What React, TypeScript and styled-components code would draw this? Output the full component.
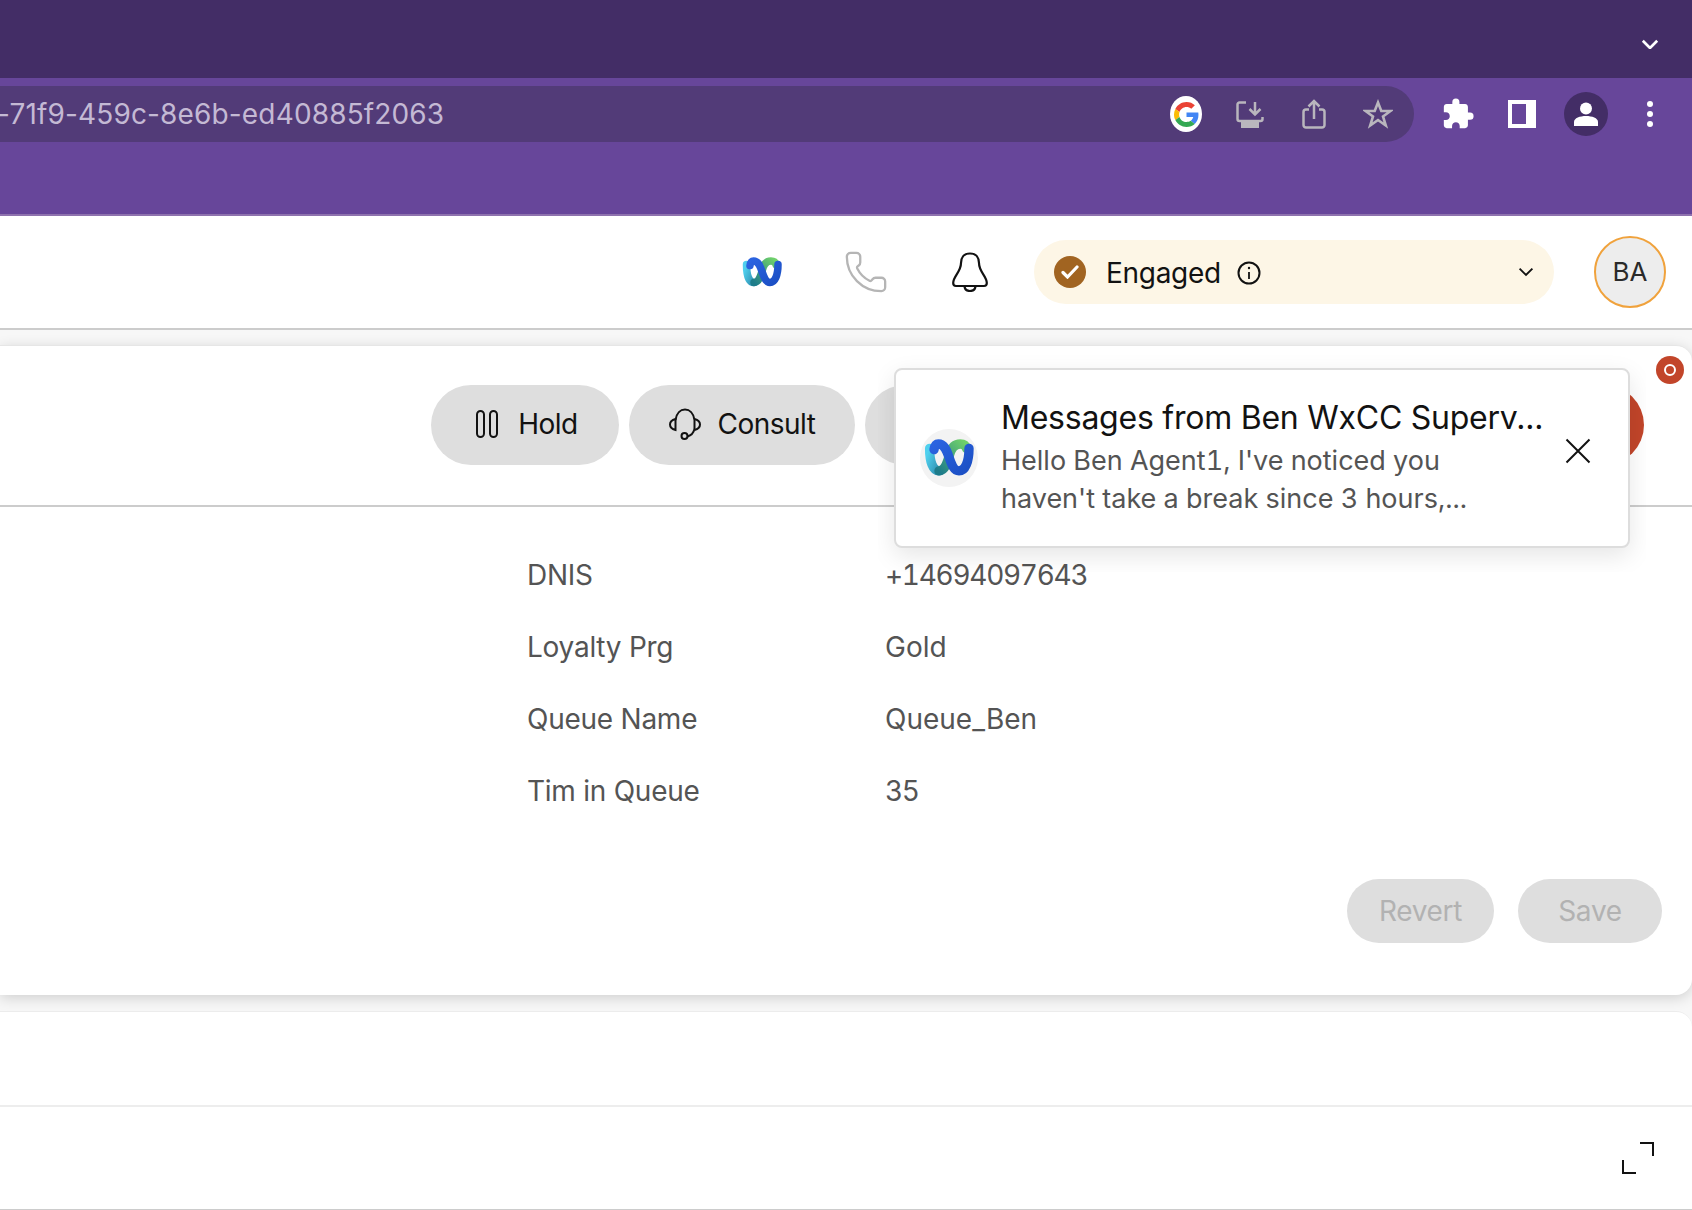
import { Fragment } from "react";
import { createGlobalStyle } from "styled-components";
import styled from "styled-components";
import { Phone } from "lucide-react";
import { MdExtension } from "react-icons/md";

const GlobalStyle = createGlobalStyle`
  html, body {
    margin: 0;
    padding: 0;
    background: #fff;
    font-family: Inter, "Liberation Sans", sans-serif;
  }
  * {
    box-sizing: border-box;
  }
`;

const Page = styled.div`
  width: 1692px;
  height: 1210px;
  overflow: hidden;
  display: flex;
  flex-direction: column;
  background: #f7f7f7;
`;

const TabStrip = styled.div`
  height: 78px;
  background: #432d66;
  display: flex;
  justify-content: flex-end;
  align-items: center;
  padding: 10px 33px 0 0;
`;

const Toolbar = styled.div`
  height: 138px;
  padding-top: 8px;
  background: #67469a;
  border-bottom: 2px solid #8e72ae;
  display: flex;
  align-items: flex-start;
`;

const AddressBar = styled.div`
  width: 1414px;
  height: 56px;
  border-radius: 0 28px 28px 0;
  background: #523b78;
  display: flex;
  align-items: center;
  padding-right: 4px;
  overflow: hidden;
`;

const Url = styled.div`
  flex: 1;
  margin-left: -3px;
  font-size: 28px;
  letter-spacing: 0.15px;
  color: #c4b9d4;
  white-space: nowrap;
`;

const ToolSlot = styled.div`
  width: 64px;
  height: 56px;
  display: flex;
  align-items: center;
  justify-content: center;
  flex-shrink: 0;
`;

const BrowserActions = styled.div`
  margin-left: 12px;
  display: flex;
`;

const GoogleBadge = styled.div`
  width: 32px;
  height: 36px;
  border-radius: 50%;
  background: #fff;
  display: flex;
  align-items: center;
  justify-content: center;
`;

const ProfileBadge = styled.div`
  width: 44px;
  height: 44px;
  border-radius: 50%;
  background: #432d66;
  display: flex;
  align-items: center;
  justify-content: center;
`;

const AppHeader = styled.header`
  height: 114px;
  background: #fff;
  border-bottom: 2px solid #cccccc;
  display: flex;
  justify-content: flex-end;
  align-items: center;
  padding-right: 26px;
`;

const HeaderSlot = styled.div`
  width: 104px;
  display: flex;
  align-items: center;
  justify-content: center;
`;

const StatusPill = styled.div`
  width: 520px;
  height: 64px;
  margin-left: 12px;
  padding: 0 20px;
  border-radius: 32px;
  background: #fdf6e6;
  display: flex;
  align-items: center;
`;

const StatusDot = styled.div`
  width: 32px;
  height: 32px;
  border-radius: 50%;
  background: #a16421;
  display: flex;
  align-items: center;
  justify-content: center;
`;

const StatusText = styled.span`
  margin-left: 20px;
  padding-top: 2px;
  font-size: 28px;
  letter-spacing: -0.3px;
  color: #121212;
`;

const StatusInfo = styled.span`
  margin-left: 16px;
  padding-top: 2px;
  display: flex;
`;

const StatusCaret = styled.span`
  margin-left: auto;
  display: flex;
`;

const UserAvatar = styled.div`
  width: 72px;
  height: 72px;
  margin-left: 40px;
  padding-bottom: 2px;
  border-radius: 50%;
  background: #ededed;
  border: 2px solid #f0a23c;
  display: flex;
  align-items: center;
  justify-content: center;
  font-size: 26px;
  color: #2a2a2a;
`;

const Workspace = styled.main`
  flex: 1;
  padding-top: 15px;
  display: flex;
  flex-direction: column;
  gap: 16px;
`;

const CallCard = styled.section`
  position: relative;
  height: 650px;
  background: #fff;
  border-top: 1px solid #e6e6e6;
  border-radius: 0 16px 16px 0;
  box-shadow: 0 3px 14px rgba(0, 0, 0, 0.16);
`;

const CallControls = styled.div`
  height: 161px;
  padding: 39px 48px 0 0;
  border-bottom: 2px solid #cccccc;
  display: flex;
  justify-content: flex-end;
  align-items: flex-start;
  gap: 10px;
`;

const ControlButton = styled.div<{ $width: number; $danger?: boolean; $gap?: number; $inset?: number }>`
  width: ${({ $width }) => $width}px;
  height: 80px;
  padding: 0 0 2px ${({ $inset }) => $inset ?? 0}px;
  border-radius: 40px;
  background: ${({ $danger }) => ($danger ? "#c2452a" : "#dedede")};
  display: flex;
  align-items: center;
  justify-content: center;
  gap: ${({ $gap }) => $gap ?? 20}px;
  font-size: 28px;
  letter-spacing: -0.5px;
  color: #121212;
`;

const Fields = styled.dl`
  margin: 32px 0 0;
  padding-left: 527px;
  display: grid;
  grid-template-columns: 358px 1fr;
  grid-auto-rows: 72px;
  align-items: center;
  font-size: 28px;
  color: #545454;
`;

const FieldLabel = styled.dt`
  margin: 0;
  letter-spacing: -0.25px;
`;

const FieldValue = styled.dd<{ $numeric?: boolean }>`
  margin: 0;
  ${({ $numeric }) => $numeric && "font-variant-numeric: tabular-nums; letter-spacing: -1.3px;"}
`;

const FormActions = styled.div`
  margin-top: 52px;
  padding-right: 30px;
  display: flex;
  justify-content: flex-end;
  gap: 24px;
`;

const GhostButton = styled.div<{ $width: number }>`
  width: ${({ $width }) => $width}px;
  height: 64px;
  border-radius: 32px;
  background: #dedede;
  color: #b2b2b2;
  font-size: 28px;
  letter-spacing: -0.3px;
  display: flex;
  align-items: center;
  justify-content: center;
`;

const ToastClip = styled.div`
  position: absolute;
  left: 878px;
  top: 0;
  width: 768px;
  height: 226px;
  padding: 22px 0 0 16px;
  overflow: hidden;
`;

const Toast = styled.div`
  width: 736px;
  height: 180px;
  background: #fff;
  border: 2px solid #dddddd;
  border-radius: 8px;
  box-shadow: 0 8px 24px rgba(0, 0, 0, 0.1);
  display: flex;
  align-items: center;
  padding: 0 37px 0 24px;
`;

const ToastLogo = styled.div`
  width: 58px;
  height: 58px;
  border-radius: 50%;
  background: #f3f3f3;
  display: flex;
  align-items: center;
  justify-content: center;
  flex-shrink: 0;
`;

const ToastBody = styled.div`
  margin-left: 23px;
  padding-bottom: 2px;
  flex: 1;
  min-width: 0;
`;

const ToastTitle = styled.div`
  margin-bottom: 2px;
  font-size: 32px;
  line-height: 44px;
  letter-spacing: -0.24px;
  color: #121212;
  white-space: nowrap;
`;

const ToastText = styled.div`
  font-size: 27px;
  line-height: 38px;
  font-variant-numeric: tabular-nums;
  color: #545454;
`;

const ToastClose = styled.div`
  margin-bottom: 14px;
  display: flex;
`;

const RecordBadge = styled.div`
  position: absolute;
  left: 1656px;
  top: 10px;
  width: 28px;
  height: 28px;
  border-radius: 50%;
  background: #c2452a;
  display: flex;
  align-items: center;
  justify-content: center;
`;

const RecordRing = styled.div`
  width: 12px;
  height: 12px;
  border-radius: 50%;
  border: 2.5px solid #fff;
`;

const LowerPanel = styled.section`
  flex: 1;
  background: #fff;
  border-top: 1px solid #ececec;
  border-bottom: 1px solid #cccccc;
  border-radius: 0 16px 0 0;
  display: flex;
  flex-direction: column;
`;

const PanelHead = styled.div`
  height: 95px;
  border-bottom: 2px solid #ededed;
`;

const PanelBody = styled.div`
  flex: 1;
  padding-right: 38px;
  display: flex;
  justify-content: flex-end;
  align-items: center;
`;

function WebexLogo({ size }: { size: number }) {
  return (
    <svg width={size} height={size * 0.75} viewBox="0 0 40 30" fill="none" strokeWidth="7.5" strokeLinecap="round">
      <defs>
        <linearGradient id="wxCyan" x1="0" y1="0" x2="1" y2="1">
          <stop offset="0" stopColor="#4fd0ee" />
          <stop offset="1" stopColor="#2f8fb0" />
        </linearGradient>
        <linearGradient id="wxGreen" x1="0" y1="1" x2="1" y2="0">
          <stop offset="0" stopColor="#1e7c8a" />
          <stop offset="1" stopColor="#6fd06a" />
        </linearGradient>
        <linearGradient id="wxBlue" x1="0" y1="0" x2="1" y2="1">
          <stop offset="0" stopColor="#2b63e0" />
          <stop offset="1" stopColor="#1b4fc4" />
        </linearGradient>
      </defs>
      <path d="M4.500 7.500C4.500 18 7 25.500 12 25.500" stroke="url(#wxCyan)" />
      <path d="M12 25.500C17 25.500 19 18 20.500 12.500C22 6.500 25 4 29 4C32 4 33.500 5.500 34 7.500" stroke="url(#wxGreen)" />
      <path d="M8 8.500C8.500 5.500 9.500 4 11.500 4C16 4 18 8.500 20 14.500C22 20.500 24 25.500 28 25.500C33 25.500 36 18 36 7.500" stroke="url(#wxBlue)" />
    </svg>
  );
}

function GoogleIcon() {
  return (
    <svg width="25" height="25" viewBox="0 0 48 48">
      <path fill="#EA4335" d="M24 9.500c3.540 0 6.710 1.220 9.210 3.600l6.850-6.850C35.900 2.380 30.470 0 24 0 14.620 0 6.510 5.380 2.560 13.220l7.980 6.190C12.430 13.720 17.740 9.500 24 9.500z" />
      <path fill="#4285F4" d="M46.980 24.550c0-1.570-.15-3.090-.38-4.550H24v9.020h12.940c-.58 2.960-2.260 5.480-4.780 7.180l7.730 6c4.510-4.180 7.090-10.360 7.090-17.650z" />
      <path fill="#FBBC05" d="M10.530 28.590c-.48-1.450-.76-2.990-.76-4.590s.27-3.140.76-4.590l-7.980-6.190C.92 16.460 0 20.120 0 24c0 3.880.92 7.540 2.560 10.780l7.970-6.190z" />
      <path fill="#34A853" d="M24 48c6.480 0 11.930-2.130 15.890-5.810l-7.730-6c-2.150 1.450-4.920 2.300-8.160 2.300-6.260 0-11.570-4.220-13.470-9.910l-7.980 6.190C6.510 42.620 14.620 48 24 48z" />
    </svg>
  );
}

function InstallIcon() {
  return (
    <svg width="28" height="27" viewBox="0 0 28 27" fill="none" stroke="#b9b6bd" strokeWidth="2.500">
      <path d="M10 1.500H3.500a2 2 0 0 0-2 2V18a2 2 0 0 0 2 2H24.500a2 2 0 0 0 2-2V16" />
      <path d="M19 1V13M13.500 8L19 13.500L24.500 8" />
      <rect x="5" y="21" width="18" height="6" fill="#b9b6bd" stroke="none" />
    </svg>
  );
}

function ShareIcon() {
  return (
    <svg width="24" height="30" viewBox="0 0 24 30" fill="none" stroke="#b9b6bd" strokeWidth="2.500">
      <path d="M7 10.500H4a2.500 2.500 0 0 0-2.500 2.500V26a2.500 2.500 0 0 0 2.500 2.500H20a2.500 2.500 0 0 0 2.500-2.500V13a2.500 2.500 0 0 0-2.500-2.500H17" />
      <path d="M12 20V2M6.500 7.500L12 2L17.500 7.500" />
    </svg>
  );
}

function StarIcon() {
  return (
    <svg width="30" height="30" viewBox="0 0 30 30" fill="none" stroke="#b9b6bd" strokeWidth="2.600" strokeLinejoin="miter">
      <path d="M15 3.500L18.300 12H27.500L20 17.500L22.800 26.500L15 21L7.200 26.500L10 17.500L2.500 12H11.700Z" />
    </svg>
  );
}

function SidePanelIcon() {
  return (
    <svg width="28" height="28" viewBox="0 0 28 28">
      <path fill="#fff" fillRule="evenodd" d="M0 0H28V28H0ZM4 4V24H18V4Z" />
    </svg>
  );
}

function ProfileIcon() {
  return (
    <svg width="26" height="26" viewBox="0 0 26 26" fill="#fff">
      <circle cx="13" cy="7.500" r="6" />
      <path d="M1 25V21C1 17 7 15 13 15C19 15 25 17 25 21V25Z" />
    </svg>
  );
}

function KebabIcon() {
  return (
    <svg width="6" height="28" viewBox="0 0 6 28" fill="#fff">
      <circle cx="3" cy="4" r="3" />
      <circle cx="3" cy="14" r="3" />
      <circle cx="3" cy="24" r="3" />
    </svg>
  );
}

function BellIcon() {
  return (
    <svg width="36" height="40" viewBox="0 0 36 40" fill="none" stroke="#121212" strokeWidth="2.200">
      <path d="M18 1.500C11.500 1.500 9 6 9 11C9 20 1.200 24 1.200 31C1.200 33 2.200 34 4 34H32C33.800 34 34.800 33 34.800 31C34.800 24 27 20 27 11C27 6 24.500 1.500 18 1.500Z" />
      <path d="M12.500 34.500C13 38 15.500 39 18 39C20.500 39 23 38 23.500 34.500" />
    </svg>
  );
}

function InfoIcon() {
  return (
    <svg width="24" height="24" viewBox="0 0 24 24" fill="none" stroke="#121212" strokeWidth="2">
      <circle cx="12" cy="12" r="10.500" />
      <path d="M12 11V18" strokeWidth="1.800" />
      <circle cx="12" cy="7" r="1.200" fill="#121212" stroke="none" />
    </svg>
  );
}

function Chevron({ width, color, stroke }: { width: number; color: string; stroke: number }) {
  return (
    <svg width={width} height={width * 0.6} viewBox="0 0 20 12" fill="none" stroke={color} strokeWidth={stroke}>
      <path d="M2 2L10 10L18 2" />
    </svg>
  );
}

function PauseIcon() {
  return (
    <svg width="22" height="28" viewBox="0 0 22 28" fill="none" stroke="#121212" strokeWidth="2">
      <rect x="1" y="1" width="7" height="26" rx="3.500" />
      <rect x="14" y="1" width="7" height="26" rx="3.500" />
    </svg>
  );
}

function HeadsetIcon() {
  return (
    <svg width="32" height="32" viewBox="0 0 32 32" fill="none" stroke="#121212" strokeWidth="2">
      <path d="M6.500 12C7.500 5 11.500 1.500 16 1.500C20.500 1.500 24.500 5 25.500 12V21" />
      <path d="M6.500 11C3 12 1 14 1 16.500C1 19 3 21 6.500 22V11Z" />
      <path d="M25.500 11C29 12 31 14 31 16.500C31 19 29 21 25.500 22" />
      <path d="M25.500 21C24.500 25 22 27.500 18.500 28.500" />
      <circle cx="15.500" cy="28" r="3" />
    </svg>
  );
}

function CloseIcon() {
  return (
    <svg width="26" height="26" viewBox="0 0 26 26" fill="none" stroke="#121212" strokeWidth="2">
      <path d="M1.500 1.500L24.500 24.500M24.500 1.500L1.500 24.500" />
    </svg>
  );
}

function ExpandIcon() {
  return (
    <svg width="32" height="32" viewBox="0 0 32 32" fill="none" stroke="#121212" strokeWidth="2">
      <path d="M18 1H31V14M1 18V31H14" />
    </svg>
  );
}

const fields = [
  { label: "DNIS", value: "+14694097643", numeric: true },
  { label: "Loyalty Prg", value: "Gold" },
  { label: "Queue Name", value: "Queue_Ben" },
  { label: "Tim in Queue", value: "35", numeric: true },
];

const App = () => {
  return (
    <Page>
      <GlobalStyle />
      <TabStrip>
        <Chevron width={18} color="#fff" stroke={3} />
      </TabStrip>
      <Toolbar>
        <AddressBar>
          <Url>-71f9-459c-8e6b-ed40885f2063</Url>
          <ToolSlot>
            <GoogleBadge>
              <GoogleIcon />
            </GoogleBadge>
          </ToolSlot>
          <ToolSlot>
            <InstallIcon />
          </ToolSlot>
          <ToolSlot>
            <ShareIcon />
          </ToolSlot>
          <ToolSlot>
            <StarIcon />
          </ToolSlot>
        </AddressBar>
        <BrowserActions>
          <ToolSlot>
            <MdExtension size={34} color="#fff" />
          </ToolSlot>
          <ToolSlot>
            <SidePanelIcon />
          </ToolSlot>
          <ToolSlot>
            <ProfileBadge>
              <ProfileIcon />
            </ProfileBadge>
          </ToolSlot>
          <ToolSlot>
            <KebabIcon />
          </ToolSlot>
        </BrowserActions>
      </Toolbar>
      <AppHeader>
        <HeaderSlot>
          <WebexLogo size={40} />
        </HeaderSlot>
        <HeaderSlot>
          <Phone size={46} color="#b5b5b5" strokeWidth={1.2} />
        </HeaderSlot>
        <HeaderSlot>
          <BellIcon />
        </HeaderSlot>
        <StatusPill>
          <StatusDot>
            <svg width="18" height="14" viewBox="0 0 18 14" fill="none" stroke="#fff" strokeWidth="3.200" strokeLinecap="round">
              <path d="M2 7.500L6.500 12L16 2" />
            </svg>
          </StatusDot>
          <StatusText>Engaged</StatusText>
          <StatusInfo>
            <InfoIcon />
          </StatusInfo>
          <StatusCaret>
            <Chevron width={16} color="#121212" stroke={2.4} />
          </StatusCaret>
        </StatusPill>
        <UserAvatar>BA</UserAvatar>
      </AppHeader>
      <Workspace>
        <CallCard>
          <CallControls>
            <ControlButton $width={188} $inset={4}>
              <PauseIcon />
              Hold
            </ControlButton>
            <ControlButton $width={226} $gap={17}>
              <HeadsetIcon />
              Consult
            </ControlButton>
            <ControlButton $width={380} />
            <ControlButton $width={389} $danger />
          </CallControls>
          <Fields>
            {fields.map((f) => (
              <Fragment key={f.label}>
                <FieldLabel>{f.label}</FieldLabel>
                <FieldValue $numeric={f.numeric}>{f.value}</FieldValue>
              </Fragment>
            ))}
          </Fields>
          <FormActions>
            <GhostButton $width={147}>Revert</GhostButton>
            <GhostButton $width={144}>Save</GhostButton>
          </FormActions>
          <ToastClip>
            <Toast>
              <ToastLogo>
                <WebexLogo size={50} />
              </ToastLogo>
              <ToastBody>
                <ToastTitle>Messages from Ben WxCC Superv...</ToastTitle>
                <ToastText>
                  Hello Ben Agent1, I've noticed you
                  <br />
                  haven't take a break since 3 hours,...
                </ToastText>
              </ToastBody>
              <ToastClose>
                <CloseIcon />
              </ToastClose>
            </Toast>
          </ToastClip>
          <RecordBadge>
            <RecordRing />
          </RecordBadge>
        </CallCard>
        <LowerPanel>
          <PanelHead />
          <PanelBody>
            <ExpandIcon />
          </PanelBody>
        </LowerPanel>
      </Workspace>
    </Page>
  );
};

export default App;
